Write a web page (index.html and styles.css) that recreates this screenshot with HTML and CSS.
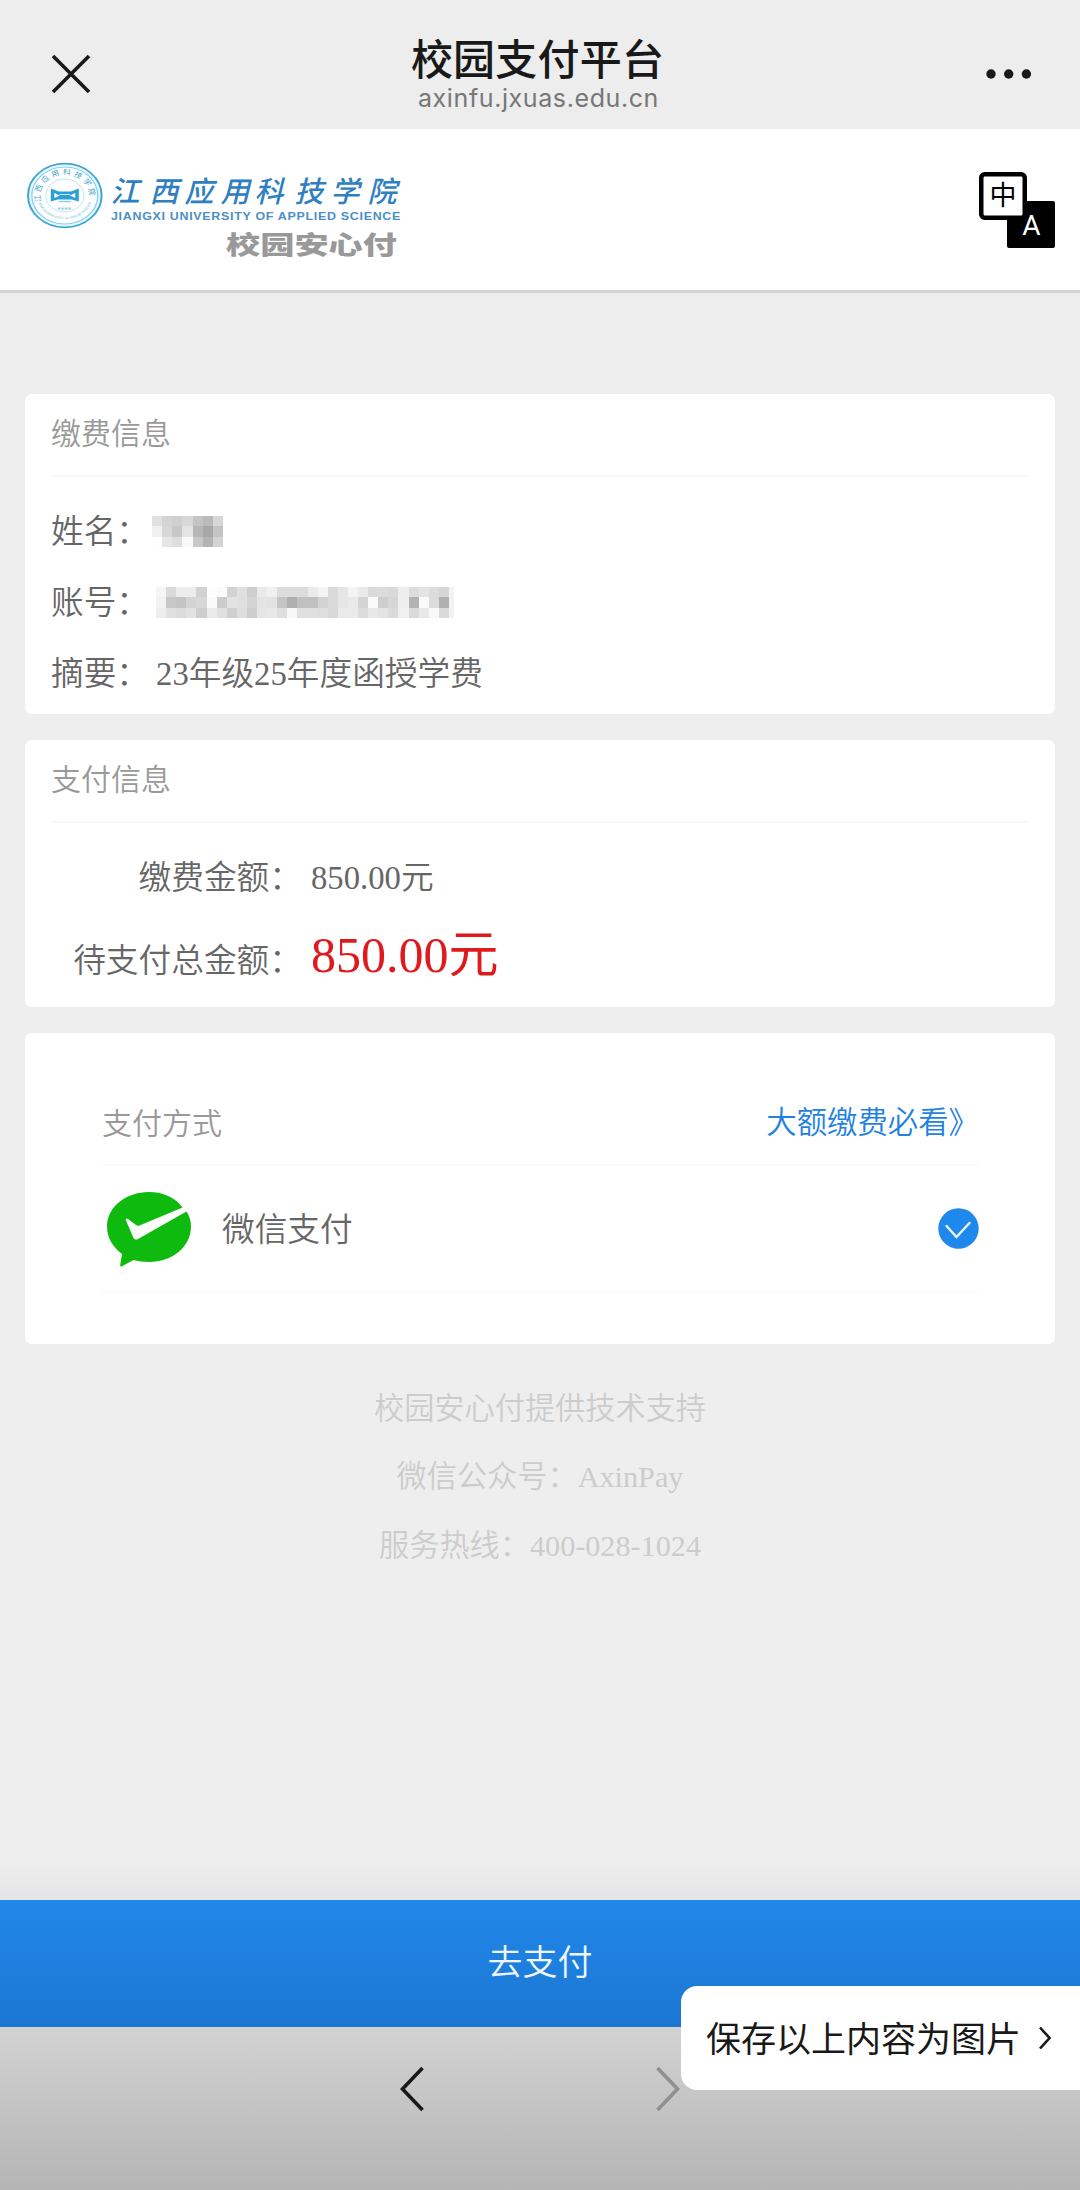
FILE: index.html
```html
<!DOCTYPE html>
<html lang="zh-CN">
<head>
    <meta charset="UTF-8">
    <meta name="viewport" content="width=device-width, initial-scale=1.0">
    <title>校园支付平台</title>
    <link rel="stylesheet" href="styles.css">
</head>
<body>
    <div class="navbar">
        <svg class="nav-icon" width="42" height="42" viewBox="0 0 42 42">
            <path d="M3 3L39 39M39 3L3 39" fill="none" stroke="#191919" stroke-width="3.6"/>
        </svg>
        <div class="nav-title">
            <h1>校园支付平台</h1>
            <span>axinfu.jxuas.edu.cn</span>
        </div>
        <svg class="nav-icon" width="48" height="12" viewBox="0 0 48 12">
            <circle cx="6" cy="6" r="4.7" fill="#191919"/>
            <circle cx="23.7" cy="6" r="4.7" fill="#191919"/>
            <circle cx="41.4" cy="6" r="4.7" fill="#191919"/>
        </svg>
    </div>

    <header>
        <svg class="logo" width="400" height="110" viewBox="0 -5 400 110">
            <!-- school emblem -->
            <g transform="translate(39.8 35.5) scale(1 0.865)">
                <circle r="36.8" fill="#e9f8fd" stroke="#3fa5d4" stroke-width="2"/>
                <circle r="33" fill="#fff" stroke="#7fd3ee" stroke-width="1.3"/>
                <circle r="19" fill="#fff" stroke="#a5dcee" stroke-width="0.8"/>
                <path id="arcTop" d="M-23.5 7A24.5 24.5 0 1 1 23.5 7" fill="none"/>
                <path id="arcBottom" d="M-26.5 8A27.8 27.8 0 0 0 26.5 8" fill="none"/>
                <text class="seal-cn"><textPath href="#arcTop" textLength="84">江西应用科技学院</textPath></text>
                <text class="seal-en"><textPath href="#arcBottom" textLength="70">JIANGXI UNIVERSITY OF APPLIED SCIENCE</textPath></text>
                <path d="M-14 -8L-6 -4.5H6L14 -8V7L7 4.5H-7L-14 7Z" fill="#2ba0d8"/>
                <path d="M-10.5 -3L-5 0L-10.5 3ZM10.5 -3L5 0L10.5 3ZM-5 -1.5H5V-0.5H-5Z" fill="#fff"/>
                <path d="M-6 7H6" stroke="#8ecfe8" stroke-width="1.6"/>
                <path d="M-7 15H7" stroke="#8ecfe8" stroke-width="2.4" stroke-dasharray="2.5 1"/>
            </g>
            <text class="logo-cn" transform="translate(11 0) skewX(-14)" x="85 124 159 195 229 269 305 342" y="42">江西应用科技学院</text>
            <text class="logo-en" x="86" y="60" textLength="290" lengthAdjust="spacingAndGlyphs">JIANGXI UNIVERSITY OF APPLIED SCIENCE</text>
            <text class="logo-pay" x="201" y="94" textLength="171" lengthAdjust="spacingAndGlyphs">校园安心付</text>
        </svg>
        <svg class="lang" width="76" height="76" viewBox="0 0 76 76">
            <rect x="28" y="29" width="48" height="47" rx="2" fill="#000"/>
            <rect x="2.25" y="2.25" width="43.5" height="43.5" rx="3.5" fill="#fff" stroke="#000" stroke-width="4.5"/>
            <text class="lang-cn" x="24" y="32.5">中</text>
            <text class="lang-en" x="52.5" y="63">A</text>
        </svg>
    </header>

    <main>
        <section class="card info">
            <h2>缴费信息</h2>
            <div class="row"><label>姓名：</label>
                <svg class="mosaic name" width="71" height="31" viewBox="0 0 7 3" preserveAspectRatio="none" shape-rendering="crispEdges"></svg>
            </div>
            <div class="row"><label>账号：</label>
                <svg class="mosaic account" width="298" height="31" viewBox="0 0 29.5 3" preserveAspectRatio="none" shape-rendering="crispEdges"></svg>
            </div>
            <div class="row"><label>摘要：</label><span>23年级25年度函授学费</span></div>
        </section>

        <section class="card amount">
            <h2>支付信息</h2>
            <div class="row"><label>缴费金额：</label><span>850.00元</span></div>
            <div class="row total"><label>待支付总金额：</label><span class="price">850.00元</span></div>
        </section>

        <section class="card method">
            <div class="method-head">
                <h2>支付方式</h2>
                <a href="#">大额缴费必看》</a>
            </div>
            <div class="method-item">
                <svg width="84" height="77" viewBox="0 0 84 77">
                    <path d="M42 2C57 2 68.500 8 75.500 17.500L32.500 35.500Q30.500 36.200 29 35L21 29Q18 27.500 18.800 30L26.500 48Q28 50.500 31 49L79.500 21.500C82.500 26 84 31 84 36.500C84 57 65 72 42 72C36 72 31 71.300 26.500 70L14.500 76.500Q13 77 13.200 75L15 64C5.500 57 0 47.500 0 36.500C0 17 19 2 42 2Z" fill="#0dba0d"/>
                </svg>
                <span>微信支付</span>
                <svg class="checked" width="41" height="41" viewBox="0 0 41 41">
                    <circle cx="20.500" cy="20.500" r="20.200" fill="#1f88ec"/>
                    <path d="M8.500 18L18.500 29L31.500 15" fill="none" stroke="#e6f6ff" stroke-width="2.500" stroke-linecap="round"/>
                </svg>
            </div>
        </section>

        <footer>
            <p>校园安心付提供技术支持</p>
            <p>微信公众号：AxinPay</p>
            <p>服务热线：400-028-1024</p>
        </footer>
    </main>

    <button class="pay">去支付</button>

    <div class="toolbar">
        <svg width="26" height="46" viewBox="0 0 26 46"><path d="M23.500 2L3.500 23L23.500 44" fill="none" stroke="#191919" stroke-width="3.600"/></svg>
        <svg width="26" height="46" viewBox="0 0 26 46"><path d="M2.500 2L22.500 23L2.500 44" fill="none" stroke="#909090" stroke-width="3.600"/></svg>
    </div>

    <div class="save-tip">
        <span>保存以上内容为图片</span>
        <svg width="14" height="24" viewBox="0 0 14 24"><path d="M2 2.500L11.500 13L2 23.500" fill="none" stroke="#191919" stroke-width="2.600"/></svg>
    </div>

    <script>
        // Grey level of each block, row by row
        var nameBlocks = [
            [225, 212, 207, 216, 196, 186, 215],
            [240, 215, 200, 228, 182, 168, 196],
            [254, 230, 222, 250, 200, 180, 212]
        ];
        var accountBlocks = [
            [245, 218, 236, 236, 210, 254, 250, 210, 224, 206, 234, 240, 220, 220, 220, 234, 244, 218, 230, 244, 234, 218, 220, 218, 238, 220, 228, 220, 214, 242],
            [242, 200, 196, 212, 216, 250, 204, 226, 224, 212, 228, 226, 196, 176, 192, 192, 210, 218, 230, 234, 212, 250, 206, 214, 238, 178, 250, 220, 176, 242],
            [238, 224, 220, 226, 206, 234, 224, 208, 222, 206, 230, 232, 222, 248, 224, 224, 222, 216, 234, 234, 220, 232, 228, 218, 240, 218, 232, 248, 218, 242]
        ];

        function drawMosaic(selector, rows) {
            var svg = document.querySelector(selector);
            rows.forEach(function(row, y) {
                row.forEach(function(level, x) {
                    var rect = document.createElementNS('http://www.w3.org/2000/svg', 'rect');
                    rect.setAttribute('x', x);
                    rect.setAttribute('y', y);
                    rect.setAttribute('width', 1);
                    rect.setAttribute('height', 1);
                    rect.setAttribute('fill', 'rgb(' + level + ',' + level + ',' + level + ')');
                    svg.appendChild(rect);
                });
            });
        }

        drawMosaic('.name', nameBlocks);
        drawMosaic('.account', accountBlocks);
    </script>
</body>
</html>
```
FILE: styles.css
```css
* {
    box-sizing: border-box;
}

body {
    margin: 0;
    height: 2190px;
    display: flex;
    flex-direction: column;
    overflow: hidden;
    font-family: "Liberation Serif", "Noto Sans CJK SC", serif;
    font-weight: 350;
    background-color: #eee;
    color: #666;
}

h1, h2, p {
    margin: 0;
    font-weight: inherit;
}

svg {
    display: block;
    flex: none;
}

.navbar {
    height: 129px;
    padding: 18px 47px 0 50px;
    display: flex;
    align-items: center;
    justify-content: space-between;
    background-color: #ededed;
}

.nav-title {
    text-align: center;
    margin-right: 2px;
    padding-bottom: 3px;
}

.nav-title h1 {
    font: 500 42px/48px "Noto Sans CJK SC", sans-serif;
    letter-spacing: 0.2px;
    color: #191919;
}

.nav-title span {
    display: block;
    padding: 3px 0 0 2px;
    font: 400 25px/28px Inter, sans-serif;
    letter-spacing: 0.6px;
    color: #777;
}

header {
    height: 164px;
    padding: 0 25px;
    display: flex;
    justify-content: space-between;
    align-items: center;
    background-color: #fff;
    border-bottom: 3px solid #d4d4d4;
}

.seal-cn {
    font: 400 8px "Noto Sans CJK SC", sans-serif;
    fill: #3d9fc8;
}

.seal-en {
    font: 400 3.5px "Liberation Sans", sans-serif;
    fill: #5db6d8;
}

.logo-cn {
    font: 500 29px "Noto Sans CJK SC", sans-serif;
    fill: #2f80c0;
}

.logo-en {
    font: 700 10.500px "Liberation Sans", sans-serif;
    letter-spacing: 0.6px;
    fill: #4a90c4;
}

.logo-pay {
    font: 900 25px "Noto Sans CJK SC", sans-serif;
    fill: #999;
}

.lang-cn {
    font: 400 27px "Noto Sans CJK SC", sans-serif;
    text-anchor: middle;
}

.lang-en {
    font: 400 28px Roboto, sans-serif;
    text-anchor: middle;
    fill: #fff;
}

main {
    flex: 1;
    padding: 101px 25px 0;
    background: linear-gradient(#eee 97.500%, #e5e5e5);
}

.card {
    background-color: #fff;
    border-radius: 7px;
    margin-bottom: 26px;
}

.card h2 {
    font-size: 30px;
    color: #999;
}

.info,
.amount {
    padding: 0 26px;
}

.info {
    height: 320px;
}

.info h2,
.amount h2 {
    height: 83px;
    line-height: 80px;
    border-bottom: 2px solid #f9f9f9;
}

.row {
    display: flex;
    align-items: center;
    gap: 7px;
    height: 71px;
    font-size: 32.700px;
    line-height: 48px;
}

.info .row:nth-child(2) {
    margin-top: 19px;
}

.mosaic.name {
    margin-left: -4px;
}

.amount {
    height: 267px;
}

.amount label {
    width: 251px;
    margin-right: 2px;
    text-align: right;
    white-space: nowrap;
}

.amount .row:nth-child(2) {
    height: 76px;
    margin-top: 17px;
}

.total {
    height: 60px;
    margin-top: 15px;
    align-items: baseline;
}

.price {
    font-size: 50px;
    font-weight: 400;
    color: #df1a1e;
}

.method {
    height: 311px;
    padding: 51px 76px 0 77px;
}

.method-head {
    display: flex;
    justify-content: space-between;
    height: 82px;
    line-height: 79px;
    border-bottom: 2px solid #fafafa;
}

.method-head a {
    font-size: 30.400px;
    color: #1f82e0;
    text-decoration: none;
}

.method-item {
    display: flex;
    align-items: center;
    height: 127px;
    padding-left: 5px;
    font-size: 32.700px;
    border-bottom: 2px solid #fafafa;
}

.method-item span {
    margin-left: 31px;
    padding-bottom: 5px;
}

.checked {
    margin-left: auto;
}

footer {
    padding-top: 5px;
    text-align: center;
    font-size: 30.200px;
    line-height: 68.300px;
    color: #ccc;
}

.pay {
    height: 127px;
    border: none;
    padding: 0 0 9px;
    font-family: "Noto Sans CJK SC", sans-serif;
    font-size: 35px;
    font-weight: 350;
    color: #eef7ff;
    background: linear-gradient(#2187ea, #1b77d2);
}

.toolbar {
    height: 163px;
    padding: 39px 0 0;
    display: flex;
    justify-content: center;
    gap: 230px;
    background: linear-gradient(#d2d2d2, #b5b5b5);
}

/* Floating tip over the pay button and the toolbar */
.save-tip {
    position: absolute;
    right: 0;
    bottom: 100px;
    width: 399px;
    height: 104px;
    padding: 0 28px 3px 25px;
    display: flex;
    align-items: center;
    justify-content: space-between;
    border-radius: 16px 0 0 16px;
    background-color: #fff;
    font: 400 35px "Noto Sans CJK SC", sans-serif;
    color: #191919;
}
```
